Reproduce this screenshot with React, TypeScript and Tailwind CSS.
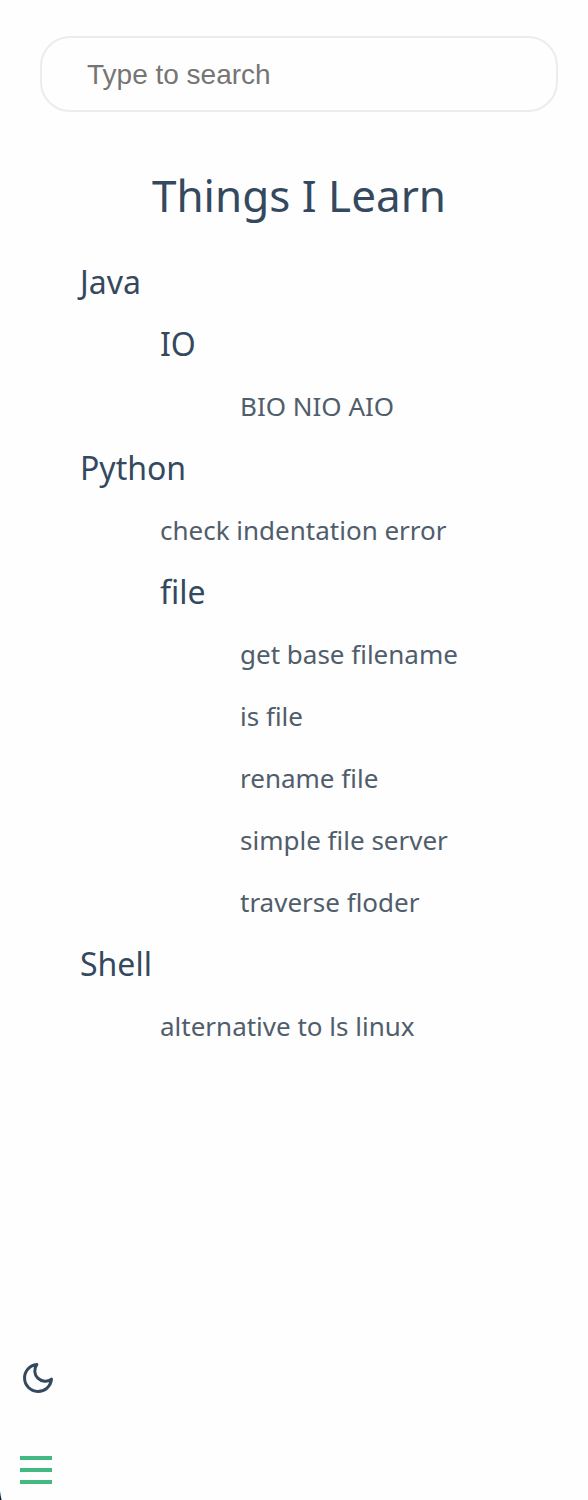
type Item = { label: string; href?: string; children?: Item[] };

const items: Item[] = [
  {
    label: "Java",
    children: [{ label: "IO", children: [{ label: "BIO NIO AIO", href: "#/java/io/bio-nio-aio" }] }],
  },
  {
    label: "Python",
    children: [
      { label: "check indentation error", href: "#/python/check-indentation-error" },
      {
        label: "file",
        children: [
          { label: "get base filename", href: "#/python/file/get-base-filename" },
          { label: "is file", href: "#/python/file/is-file" },
          { label: "rename file", href: "#/python/file/rename-file" },
          { label: "simple file server", href: "#/python/file/simple-file-server" },
          { label: "traverse floder", href: "#/python/file/traverse-floder" },
        ],
      },
    ],
  },
  {
    label: "Shell",
    children: [{ label: "alternative to ls linux", href: "#/shell/alternative-to-ls-linux" }],
  },
];

function Tree({ items }: { items: Item[] }) {
  return (
    <ul className="pl-10 [&_ul]:pl-20">
      {items.map((item) => (
        <li key={item.label}>
          {item.href ? (
            <a href={item.href} className="block text-[26px] leading-[62px] text-[#505d6b]">
              {item.label}
            </a>
          ) : (
            <p className="text-[32px] leading-[62px]">{item.label}</p>
          )}
          {item.children && <Tree items={item.children} />}
        </li>
      ))}
    </ul>
  );
}

function MoonIcon() {
  return (
    <svg
      aria-hidden="true"
      viewBox="0 0 24 24"
      className="size-9"
      fill="none"
      stroke="currentColor"
      strokeWidth="2"
      strokeLinecap="round"
      strokeLinejoin="round"
    >
      <path d="M21 12.79A9 9 0 1 1 11.21 3 7 7 0 0 0 21 12.79z" />
    </svg>
  );
}

export default function App() {
  return (
    <div className="relative flex min-h-screen flex-col overflow-hidden bg-[#fefefe] font-['Noto_Sans',sans-serif] text-[#34495e]">
      <aside className="flex flex-1 flex-col pt-9 pr-[30px] pl-10">
        <input
          type="search"
          aria-label="Search"
          placeholder="Type to search"
          className="h-19 w-full rounded-[30px] border-2 border-[#ececec] bg-transparent px-[45px] pt-0.5 font-['Liberation_Sans',sans-serif] text-[28px] outline-none placeholder:text-[#757575]"
        />
        <h1 className="mt-[47px] mb-5 text-center text-[44px] leading-[72px]">
          <a href="#/">Things I Learn</a>
        </h1>
        <nav aria-label="Contents">
          <Tree items={items} />
        </nav>
      </aside>
      <div className="flex flex-col items-start gap-[60px] pb-4 pl-5">
        <button type="button" aria-label="Toggle dark mode">
          <MoonIcon />
        </button>
        <button type="button" aria-label="Toggle sidebar" className="flex w-8 flex-col gap-2">
          <span className="h-1 w-full bg-[#42b983]" />
          <span className="h-1 w-full bg-[#42b983]" />
          <span className="h-1 w-full bg-[#42b983]" />
        </button>
      </div>
      <svg aria-hidden="true" viewBox="0 0 3 10" className="absolute bottom-0 left-0 h-[10px] w-[3px]">
        <path d="M0 1Q0.5 6 1.6 10H0Z" fill="#0b1d30" />
      </svg>
    </div>
  );
}
